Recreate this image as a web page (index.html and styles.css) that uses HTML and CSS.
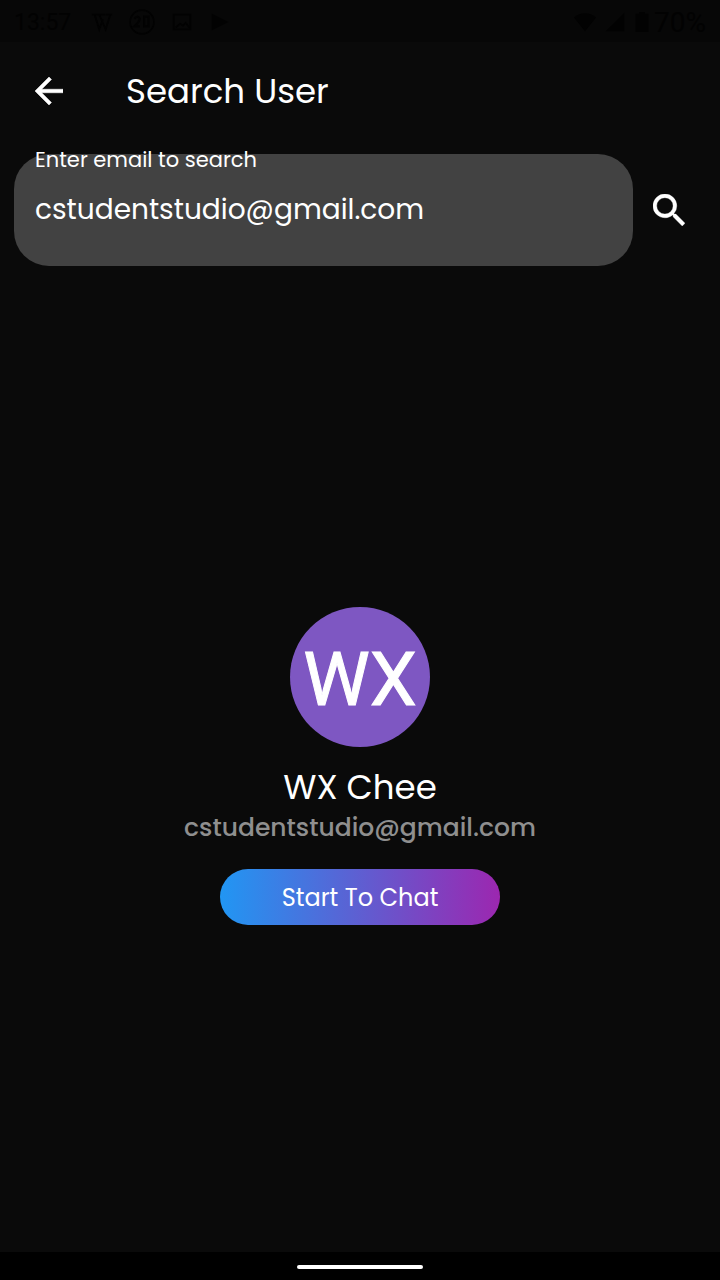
FILE: index.html
```html
<!DOCTYPE html>
<html lang="en">
<head>
<meta charset="utf-8">
<meta name="viewport" content="width=device-width, initial-scale=1">
<title>Search User</title>
<link rel="stylesheet" href="styles.css">
</head>
<body>
<div class="screen">
  <div class="status-bar">
    <span class="status-time">13:57</span>
    <svg class="status-icon" viewBox="0 0 24 24" aria-hidden="true"><path d="M1 4h9M8 4h7M16 4h7M4 4l5 16 4-11M9 4l7 16 5-16" fill="none" stroke="currentColor" stroke-width="2"/></svg>
    <svg class="status-icon status-icon-wide" viewBox="0 0 24 24" aria-hidden="true"><circle cx="12" cy="12" r="11" fill="none" stroke="currentColor" stroke-width="1.5"/><path d="M5 9q3-4 5 0-1 4-5 7h5M14 7v9h4V7z" fill="none" stroke="currentColor" stroke-width="2"/></svg>
    <svg class="status-icon" viewBox="0 0 24 24" aria-hidden="true"><path d="M3 4h18v16H3zM5 18l5-4 3 2 3-3 4 5" fill="none" stroke="currentColor" stroke-width="2"/></svg>
    <svg class="status-icon" viewBox="0 0 24 24" aria-hidden="true"><path d="M3 3l18 9-18 9z" fill="currentColor"/></svg>
    <span class="status-spacer"></span>
    <svg class="status-icon status-small" viewBox="0 0 24 24" aria-hidden="true"><path d="M0 7q12-9 24 0L12 22z" fill="currentColor"/></svg>
    <svg class="status-icon status-small" viewBox="0 0 24 24" aria-hidden="true"><path d="M2 22L22 2v20z" fill="currentColor"/></svg>
    <svg class="status-icon status-battery" viewBox="0 0 16 24" aria-hidden="true"><path d="M1 3h4V1h6v2h4v20H1z" fill="currentColor"/></svg>
    <span class="status-level">70%</span>
  </div>
  <header class="app-bar">
    <button class="icon-button" type="button" aria-label="Back">
      <svg class="back-icon" viewBox="4 4 16 16" aria-hidden="true"><path d="M20 11H7.83l5.59-5.59L12 4l-8 8 8 8 1.41-1.41L7.83 13H20z" fill="currentColor" stroke="currentColor" stroke-width=".3"/></svg>
    </button>
    <h1 class="title">Search User</h1>
  </header>
  <main class="content">
    <form class="search">
      <div class="field">
        <label class="field-label" for="email">Enter email to search</label>
        <input class="field-input" id="email" type="text" value="cstudentstudio@gmail.com">
      </div>
      <button class="icon-button" type="button" aria-label="Search">
        <svg class="search-icon" viewBox="3 3 17.5 17.5" aria-hidden="true"><path d="M15.5 14h-.79l-.28-.27A6.471 6.471 0 0 0 16 9.5 6.5 6.5 0 1 0 9.5 16c1.61 0 3.09-.59 4.23-1.57l.27.28v.79l5 4.99L20.49 19zM9.5 14a4.5 4.5 0 1 1 0-9 4.5 4.5 0 0 1 0 9z" fill="currentColor" stroke="currentColor" stroke-width=".2"/></svg>
      </button>
    </form>
    <section class="result">
      <div class="avatar">WX</div>
      <h2 class="name">WX Chee</h2>
      <p class="email">cstudentstudio@gmail.com</p>
      <button class="chat-button" type="button">Start To Chat</button>
    </section>
  </main>
  <div class="nav-bar"><span class="nav-handle"></span></div>
</div>
</body>
</html>
```
FILE: styles.css
```css
* {
  box-sizing: border-box;
}

body {
  margin: 0;
  background: #0a0a0a;
  color: #fff;
  font-family: Poppins, Inter, sans-serif;
}

button,
input {
  font: inherit;
  color: inherit;
  border: 0;
  padding: 0;
  background: none;
}

.screen {
  display: flex;
  flex-direction: column;
  min-height: 100vh;
}

.status-bar {
  display: flex;
  align-items: center;
  gap: 16px;
  height: 42px;
  padding: 2px 14px 0;
  background: #070707;
  color: #020202;
  font-family: Roboto, sans-serif;
  font-size: 23px;
}

.status-icon {
  width: 22px;
  height: 22px;
}

.status-time {
  margin-right: 4px;
}

.status-icon-wide {
  width: 26px;
  height: 26px;
}

.status-spacer {
  flex: 1;
}

.status-small {
  margin-right: -8px;
}

.status-battery {
  width: 16px;
  margin-right: -12px;
}

.status-level {
  font-size: 28px;
}

.app-bar {
  display: flex;
  align-items: center;
  gap: 42px;
  height: 98px;
  padding: 0 14px;
}

.icon-button {
  display: flex;
  flex: none;
  align-items: center;
  justify-content: center;
  width: 70px;
  height: 70px;
  cursor: pointer;
}

.back-icon {
  width: 28px;
  height: 28px;
}

.search-icon {
  width: 32px;
  height: 32px;
}

.title {
  margin: 0;
  font-size: 34px;
  font-weight: 400;
  line-height: 48px;
}

.content {
  display: flex;
  flex: 1;
  flex-direction: column;
}

.search {
  display: flex;
  align-items: center;
  gap: 1px;
  padding: 14px 16px 14px 14px;
}

.field {
  position: relative;
  flex: 1;
  height: 112px;
  border-radius: 35px;
  background: #424242;
}

.field-label {
  position: absolute;
  top: -8px;
  left: 21px;
  font-size: 21px;
  line-height: 28px;
}

.field-input {
  width: 100%;
  height: 112px;
  padding: 0 21px;
  font-size: 28px;
  outline: 0;
}

.result {
  display: flex;
  flex: 1;
  flex-direction: column;
  align-items: center;
  justify-content: center;
}

.avatar {
  display: flex;
  align-items: center;
  justify-content: center;
  width: 140px;
  height: 140px;
  padding-top: 3px;
  border-radius: 50%;
  background: #7e57c2;
  font-family: Roboto, sans-serif;
  font-size: 75px;
  -webkit-text-stroke: 1px #fff;
}

.name {
  margin: 14px 0 0;
  font-size: 34px;
  font-weight: 400;
  line-height: 52px;
}

.email {
  margin: 0 0 26px;
  color: #8f8f8f;
  font-size: 25px;
  font-weight: 500;
  line-height: 30px;
}

.chat-button {
  width: 280px;
  height: 56px;
  border-radius: 28px;
  background: linear-gradient(90deg, #2196f3, #9c27b0);
  font-size: 24px;
  cursor: pointer;
}

.nav-bar {
  display: flex;
  align-items: center;
  justify-content: center;
  height: 28px;
  padding-top: 2px;
  background: #000;
}

.nav-handle {
  width: 126px;
  height: 4px;
  border-radius: 2px;
  background: #fff;
}
```
